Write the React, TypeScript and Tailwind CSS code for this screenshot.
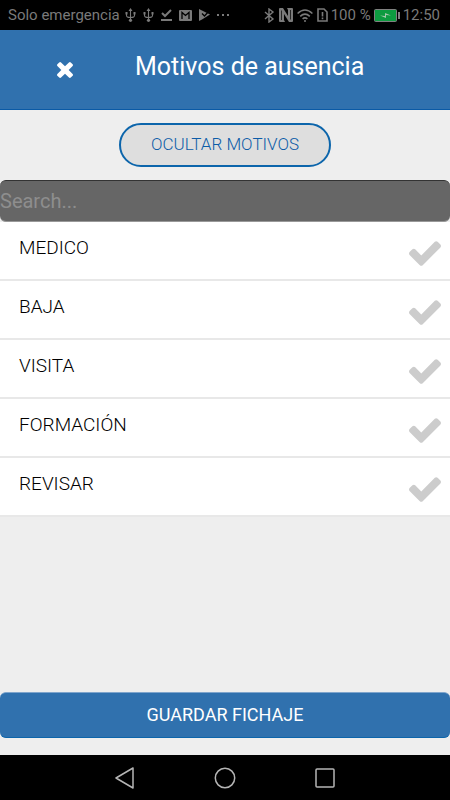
import React, { useState } from 'react';

const REASONS = ['MEDICO', 'BAJA', 'VISITA', 'FORMACIÓN', 'REVISAR'];

const CloseIcon = () => (
  <svg className="size-4" viewBox="302 366 1188 1188" fill="currentColor" aria-hidden="true">
    <path d="M1490 1322q0 40-28 68l-136 136q-28 28-68 28t-68-28l-294-294-294 294q-28 28-68 28t-68-28l-136-136q-28-28-28-68t28-68l294-294-294-294q-28-28-28-68t28-68l136-136q28-28 68-28t68 28l294 294 294-294q28-28 68-28t68 28l136 136q28 28 28 68t-28 68l-294 294 294 294q28 28 28 68z" />
  </svg>
);

const CheckIcon = () => (
  <svg className="h-[25px] w-8" viewBox="121 334 1550 1188" fill="currentColor" aria-hidden="true">
    <path d="M1671 566q0 40-28 68l-724 724-136 136q-28 28-68 28t-68-28l-136-136-362-362q-28-28-28-68t28-68l136-136q28-28 68-28t68 28l294 295 656-657q28-28 68-28t68 28l136 136q28 28 28 68z" />
  </svg>
);

const UsbIcon = () => (
  <svg className="h-[14px] w-[11px]" viewBox="0 0 11 14" aria-hidden="true">
    <path d="M5.5 2v10M1.5 5v2.500q0 2 4 2M9.500 5v2.500q0 2-4 2" fill="none" stroke="currentColor" strokeWidth="1.1" />
    <path d="M5.500 0l2 3h-4zM.5 4h2v2.500h-2zM8.500 4h2v2.500h-2z" fill="currentColor" />
    <circle cx="5.500" cy="12.300" r="1.600" fill="currentColor" />
  </svg>
);

const StatusBar = () => (
  <div className="flex h-[30px] items-center justify-between bg-black pl-2 pr-2.5 text-[15px] text-[#7a7a7a]">
    <div className="flex items-center gap-[5px]">
      <span className="whitespace-nowrap">Solo emergencia</span>
      <div className="flex items-center gap-[7px]">
        <UsbIcon />
        <UsbIcon />
        <svg className="h-3 w-[11px]" viewBox="0 0 11 12" fill="none" stroke="currentColor" strokeWidth="2">
          <path d="M1 4l3 3 6-6M0 11h11" />
        </svg>
        <svg className="h-[11px] w-[13px]" viewBox="0 0 13 11">
          <rect width="13" height="11" rx="1" fill="currentColor" />
          <path d="M3 9V2.500l3.500 3 3.500-3V9" fill="none" stroke="#000" strokeWidth="1.3" />
        </svg>
        <svg className="h-3 w-[11px]" viewBox="0 0 11 12">
          <path d="M0 0l3 1.500v9L0 12zM3 1.500L11 5.500 3 10.500z" fill="currentColor" />
          <path d="M3 4.500l2.500 2.500L10 2" fill="none" stroke="#000" strokeWidth="1.3" />
        </svg>
        <svg className="h-[2px] w-3" viewBox="0 0 12 2" fill="currentColor">
          <path d="M0 0h2v2H0zM5 0h2v2H5zM10 0h2v2h-2z" />
        </svg>
      </div>
    </div>
    <div className="flex items-center gap-[3px]">
      <div className="flex items-center gap-1">
        <svg className="h-[15px] w-[11px]" viewBox="0 0 11 15" fill="none" stroke="currentColor" strokeWidth="1.4">
          <path d="M1 4l8 7-4 3V1l4 3-8 7" />
        </svg>
        <svg className="h-[14px] w-[14px]" viewBox="0 0 14 14">
          <path d="M1 0h3l5 8V2L8 0h5q1 0 1 1v12q0 1-1 1h-3L5 6v6l1 2H1q-1 0-1-1V1q0-1 1-1z" fill="currentColor" />
          <path d="M2.500 12V2.500M11.500 11.500V2" fill="none" stroke="#000" strokeWidth="0.7" />
        </svg>
        <svg className="h-[13px] w-4" viewBox="0 0 16 13" fill="none" stroke="currentColor" strokeWidth="1.6">
          <path d="M0.600 4.500q7.400-7 14.800 0M3.200 7.300q4.800-4.400 9.600 0M5.600 9.900q2.400-2 4.800 0" />
          <circle cx="8" cy="12" r="1" fill="currentColor" stroke="none" />
        </svg>
        <svg className="h-[14px] w-[11px]" viewBox="0 0 11 14" fill="none" stroke="currentColor" strokeWidth="1.6">
          <path d="M1 1h6l3 3v9H1zM5.500 4v4.500M5.500 9.500v1.700" />
        </svg>
      </div>
      <span className="whitespace-nowrap">100 %</span>
      <svg className="h-[13px] w-[26px]" viewBox="0 0 26 13">
        <rect x="0.500" y="0.500" width="22" height="12" rx="1" fill="#0d9b40" stroke="#808080" />
        <path d="M24 3h2v7h-2z" fill="#808080" />
        <path d="M6 6.500l5 .5V4l6 2.500-5-.5v3z" fill="#a5c8ad" />
      </svg>
      <span>12:50</span>
    </div>
  </div>
);

const NavigationBar = () => (
  <nav className="flex h-[45px] items-center justify-center gap-[78px] bg-black text-[#b5b5b5]">
    <button type="button" aria-label="Atrás">
      <svg className="size-[22px]" viewBox="0 0 22 22" fill="none" stroke="currentColor" strokeWidth="1.5" strokeLinejoin="round">
        <path d="M19 1v20L2 11z" />
      </svg>
    </button>
    <button type="button" aria-label="Inicio">
      <svg className="size-[22px]" viewBox="0 0 22 22" fill="none" stroke="currentColor" strokeWidth="1.5">
        <circle cx="11" cy="11" r="9.700" />
      </svg>
    </button>
    <button type="button" aria-label="Recientes">
      <svg className="size-[22px]" viewBox="0 0 22 22" fill="none" stroke="currentColor" strokeWidth="1.5">
        <rect x="2" y="2" width="18" height="18" rx="1" />
      </svg>
    </button>
  </nav>
);

const ReasonRow: React.FC<{ name: string; selected: boolean; onSelect: () => void }> = ({
  name,
  selected,
  onSelect,
}) => (
  <li className="border-b-2 border-[#e8e8e8] bg-white">
    <button
      type="button"
      aria-pressed={selected}
      className="flex h-[57px] w-full items-center justify-between pl-[19px] pr-[9px] text-[19px] font-light text-black"
      onClick={onSelect}
    >
      <span className="pb-1">{name}</span>
      <span className={selected ? 'pt-1.5 text-[#3071ae]' : 'pt-1.5 text-[#cccccc]'}>
        <CheckIcon />
      </span>
    </button>
  </li>
);

const App = () => {
  const [search, setSearch] = useState('');
  const [selected, setSelected] = useState('');
  const [visible, setVisible] = useState(true);

  const reasons = REASONS.filter((reason) => reason.includes(search.toUpperCase()));

  return (
    <div className="flex min-h-screen flex-col bg-[#eeeeee] font-['Roboto',sans-serif]">
      <StatusBar />
      <header className="flex h-20 items-center border-b border-[#0a5aa6] bg-[#3071ae] text-white">
        <button type="button" aria-label="Cerrar" className="ml-[57px]">
          <CloseIcon />
        </button>
        <h1 className="ml-[62px] pb-1.5 text-[25px]">Motivos de ausencia</h1>
      </header>
      <main className="flex flex-1 flex-col">
        <button
          type="button"
          className="mx-auto my-[13px] h-11 w-[212px] rounded-full border-2 border-[#0c65ab] bg-[#dedede] text-[17px] font-light text-[#0c5ca8]"
          onClick={() => setVisible(!visible)}
        >
          {visible ? 'OCULTAR MOTIVOS' : 'VER MOTIVOS'}
        </button>
        {visible && (
          <>
            <input
              type="text"
              aria-label="Search"
              placeholder="Search..."
              value={search}
              onChange={(e) => setSearch(e.target.value)}
              className="h-[42px] w-full rounded-md border-b border-t border-b-[#999999] border-t-[#333333] bg-[#666666] text-xl text-white placeholder:text-[#8e8e8e]"
            />
            <ul>
              {reasons.map((reason) => (
                <ReasonRow
                  key={reason}
                  name={reason}
                  selected={reason === selected}
                  onSelect={() => setSelected(reason)}
                />
              ))}
            </ul>
          </>
        )}
        <button
          type="button"
          className="mb-[17px] mt-auto h-[46px] w-full rounded-md border-b border-t border-b-[#0c65ab] border-t-[#7fa5cc] bg-[#3071ae] text-lg text-white"
        >
          GUARDAR FICHAJE
        </button>
      </main>
      <NavigationBar />
    </div>
  );
};

export default App;
